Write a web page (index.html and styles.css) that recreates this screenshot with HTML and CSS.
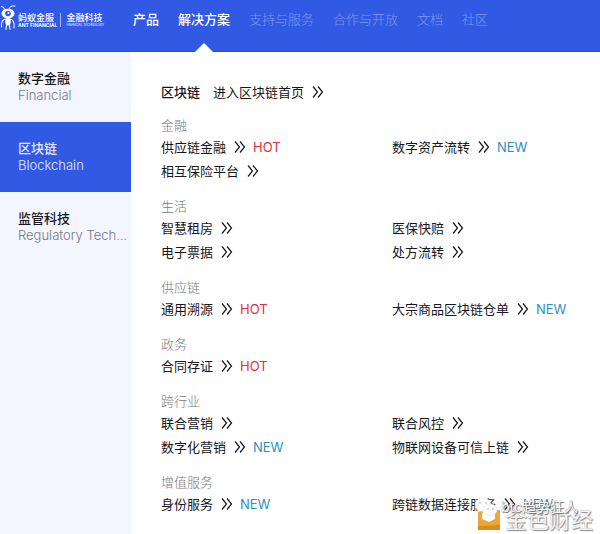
FILE: index.html
```html
<!DOCTYPE html>
<html lang="zh-CN">
<head>
    <meta charset="UTF-8">
    <meta name="viewport" content="width=device-width, initial-scale=1.0">
    <title>蚂蚁金服金融科技</title>
    <link rel="stylesheet" href="styles.css">
</head>
<body>
    <svg class="sprite" aria-hidden="true">
        <symbol id="more" viewBox="0 0 12 12">
            <path d="M1 .5 5.500 6 1 11.500M6 .5 10.500 6 6 11.500" fill="none" stroke="currentColor" stroke-width="1.2"/>
        </symbol>
    </svg>

    <header class="header">
        <a class="logo" href="#">
            <svg class="logo-ant" viewBox="0 0 17 31" aria-hidden="true">
                <g fill="none" stroke="#fff" stroke-linecap="round">
                    <path d="M5 10Q4 6 1.5 6.5M9 9Q10 5 15 6" stroke-width="1"/>
                    <path d="M6 19Q1 19 1.5 27M10 19Q15 20 14 28M7 23 6 29.5M9 23 10 29.5" stroke-width="1.1"/>
                </g>
                <ellipse cx="8" cy="13.5" rx="6.5" ry="4.8" fill="#fff"/>
                <ellipse cx="8" cy="21.5" rx="2.8" ry="4" fill="#fff"/>
                <circle cx="8" cy="13.5" r="2.8" fill="#3259e3"/>
                <circle cx="8.5" cy="13" r="1.1" fill="#fff"/>
            </svg>
            <span class="logo-name">
                <strong>蚂蚁金服</strong>
                <small class="logo-en">ANT FINANCIAL</small>
            </span>
            <span class="logo-name logo-sub">
                <strong>金融科技</strong>
                <small>FINANCIAL TECHNOLOGY</small>
            </span>
        </a>
        <nav class="nav">
            <a class="on" href="#">产品</a>
            <a class="on current" href="#">解决方案</a>
            <a href="#">支持与服务</a>
            <a href="#">合作与开放</a>
            <a href="#">文档</a>
            <a href="#">社区</a>
        </nav>
    </header>

    <div class="main">
        <aside class="side">
            <a class="side-item" href="#"><strong>数字金融</strong><span>Financial</span></a>
            <a class="side-item active" href="#"><strong>区块链</strong><span>Blockchain</span></a>
            <a class="side-item" href="#"><strong>监管科技</strong><span>Regulatory Tech...</span></a>
        </aside>

        <main class="content">
            <div class="title">
                <h1>区块链</h1>
                <a class="link" href="#">进入区块链首页<svg class="more"><use href="#more"/></svg></a>
            </div>

            <section class="group">
                <h2>金融</h2>
                <div class="links">
                    <a class="link" href="#">供应链金融<svg class="more"><use href="#more"/></svg><em class="hot">HOT</em></a>
                    <a class="link" href="#">数字资产流转<svg class="more"><use href="#more"/></svg><em class="new">NEW</em></a>
                    <a class="link" href="#">相互保险平台<svg class="more"><use href="#more"/></svg></a>
                </div>
            </section>

            <section class="group">
                <h2>生活</h2>
                <div class="links">
                    <a class="link" href="#">智慧租房<svg class="more"><use href="#more"/></svg></a>
                    <a class="link" href="#">医保快赔<svg class="more"><use href="#more"/></svg></a>
                    <a class="link" href="#">电子票据<svg class="more"><use href="#more"/></svg></a>
                    <a class="link" href="#">处方流转<svg class="more"><use href="#more"/></svg></a>
                </div>
            </section>

            <section class="group">
                <h2>供应链</h2>
                <div class="links">
                    <a class="link" href="#">通用溯源<svg class="more"><use href="#more"/></svg><em class="hot">HOT</em></a>
                    <a class="link" href="#">大宗商品区块链仓单<svg class="more"><use href="#more"/></svg><em class="new">NEW</em></a>
                </div>
            </section>

            <section class="group">
                <h2>政务</h2>
                <div class="links">
                    <a class="link" href="#">合同存证<svg class="more"><use href="#more"/></svg><em class="hot">HOT</em></a>
                </div>
            </section>

            <section class="group">
                <h2>跨行业</h2>
                <div class="links">
                    <a class="link" href="#">联合营销<svg class="more"><use href="#more"/></svg></a>
                    <a class="link" href="#">联合风控<svg class="more"><use href="#more"/></svg></a>
                    <a class="link" href="#">数字化营销<svg class="more"><use href="#more"/></svg><em class="new">NEW</em></a>
                    <a class="link" href="#">物联网设备可信上链<svg class="more"><use href="#more"/></svg></a>
                </div>
            </section>

            <section class="group">
                <h2>增值服务</h2>
                <div class="links">
                    <a class="link" href="#">身份服务<svg class="more"><use href="#more"/></svg><em class="new">NEW</em></a>
                    <a class="link" href="#">跨链数据连接服务<svg class="more"><use href="#more"/></svg><em class="new">NEW</em></a>
                </div>
            </section>
        </main>
    </div>

    <div class="mark mark-site">
        <svg class="mark-logo" viewBox="0 0 24 24" aria-hidden="true">
            <path d="M1 2H23V22H1Z" fill="#eda633"/>
            <path d="M1 18 23 17V22H1Z" fill="#d98c1c"/>
            <path d="M5 5 12 2 18 5V11L12 14 5 11Z" fill="#fff"/>
        </svg>
        <span>金色财经</span>
    </div>
    <div class="mark mark-author">
        <svg class="mark-chat" viewBox="0 0 24 20" aria-hidden="true">
            <g fill="#fff" stroke="#ddd" stroke-width=".6">
                <path d="M9 1C4 1 1 4 1 8c0 2 1 4 3 5l-1 3 3-2c6 1 11-1 11-6 0-4-3-7-8-7Z"/>
                <path d="M16 7c-4 0-7 2-7 6s4 6 9 5l3 1-1-2c2-1 3-2 3-4 0-4-3-6-7-6Z"/>
            </g>
            <g fill="#ccc"><circle cx="6" cy="6" r="1"/><circle cx="12" cy="6" r="1"/><circle cx="14" cy="12" r="1"/><circle cx="19" cy="12" r="1"/></g>
        </svg>
        <span>btc趋势狂人</span>
    </div>
</body>
</html>
```
FILE: styles.css
```css
:root {
    --blue: #3259e3;
    --side: #f3f6fe;
    --text: #15171c;
    --gray: #75787e;
}

* {
    box-sizing: border-box;
}

body {
    margin: 0;
    min-height: 100vh;
    position: relative;
    display: flex;
    flex-direction: column;
    background: #fff;
    color: var(--text);
    font-family: Inter, 'Noto Sans CJK SC', sans-serif;
    font-size: 13px;
    line-height: 20px;
}

a {
    color: inherit;
    text-decoration: none;
}

.sprite {
    display: none;
}

/* 顶部导航 */
.header {
    display: flex;
    height: 52px;
    background: var(--blue);
    border-bottom: 1px solid #2c4cc0;
    color: #fff;
}

.logo {
    display: flex;
    flex: 0 0 133px;
    align-items: flex-start;
}

.logo-ant {
    width: 17px;
    height: 31px;
}

.logo-name {
    display: flex;
    flex-direction: column;
    margin-top: 13px;
    padding-left: 1px;
    font-size: 9px;
    line-height: 10px;
    white-space: nowrap;
}

.logo-name strong {
    font-weight: 500;
}

.logo-name small {
    font-size: 3px;
    line-height: 4px;
}

.logo-name .logo-en {
    font-size: 5px;
    font-weight: 700;
}

.logo-sub {
    margin-left: 3px;
    padding-left: 5px;
    border-left: 1px solid #a9b9f5;
}

.nav {
    display: flex;
    gap: 19px;
    color: #7f98f0;
    font-weight: 300;
    line-height: 38px;
    white-space: nowrap;
}

.nav .on {
    color: #fff;
    font-weight: 500;
}

.nav .current {
    position: relative;
}

.current::after {
    content: '';
    position: absolute;
    bottom: -1px;
    left: 50%;
    margin-left: -9px;
    border: 9px solid transparent;
    border-top: 0;
    border-bottom-color: #fff;
}

/* 左侧分类 */
.main {
    display: flex;
    flex: 1;
}

.side {
    flex: 0 0 131px;
    min-width: 0;
    background: var(--side);
}

.side-item {
    display: flex;
    flex-direction: column;
    height: 70px;
    padding: 18px 0 0 18px;
    line-height: 17px;
}

.side-item strong {
    font-weight: 500;
}

.side-item span {
    color: var(--gray);
    font-weight: 300;
    white-space: nowrap;
}

.side-item.active,
.active span {
    background: var(--blue);
    color: #e4ecff;
}

/* 右侧链接 */
.content {
    flex: 1;
    min-width: 0;
    padding: 30px 0 0 30px;
}

.title {
    display: flex;
    gap: 13px;
    margin-bottom: 13px;
}

h1,
h2 {
    margin: 0;
    font-size: 13px;
}

h1 {
    font-weight: 500;
    line-height: 20px;
}

h2 {
    color: var(--gray);
    font-weight: 300;
}

.group {
    margin-bottom: 13px;
}

.links {
    display: grid;
    grid-template-columns: 231px 1fr;
    line-height: 24px;
}

.link {
    display: flex;
    align-items: center;
    white-space: nowrap;
}

.more {
    width: 12px;
    height: 12px;
    margin: 0 7px 0 8px;
}

em {
    font-style: normal;
}

.hot {
    color: #e0303c;
}

.new {
    color: #2b8fc4;
}

/* 水印 */
.mark {
    position: absolute;
    display: flex;
    align-items: center;
    color: #fff;
    white-space: nowrap;
}

.mark-site {
    right: 7px;
    bottom: 1px;
    gap: 4px;
    color: #f4f4f4;
    font-size: 22px;
    line-height: 26px;
    text-shadow: 1px 1px 1px #888, 0 0 1px #999;
}

.mark-logo {
    width: 24px;
    height: 24px;
}

.mark-author {
    right: 22px;
    bottom: 17px;
    gap: 3px;
    font-size: 14px;
    text-shadow: 1px 1px 1px #666, 0 0 1px #777;
}

.mark-chat {
    width: 24px;
    height: 20px;
}
```
